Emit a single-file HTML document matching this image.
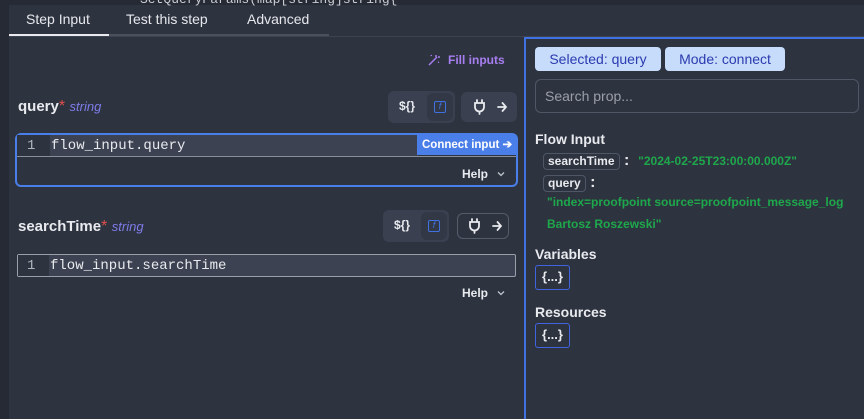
<!DOCTYPE html>
<html><head><style>
*{box-sizing:border-box;margin:0;padding:0}
body{width:864px;height:419px;overflow:hidden;background:#2e3340;font-family:"Liberation Sans",sans-serif;color:#e8eaee;position:relative}
.abs{position:absolute}
.mono{font-family:"Liberation Mono",monospace}
.tab{position:absolute;top:11px;font-size:14px;color:#e6e8ec}
.lbl{font-weight:bold;font-size:15px}
.str{color:#7c7ce8;font-style:italic;font-size:13px}
.grp{position:absolute;background:#3a4050;border-radius:6px}
.btn{position:absolute;border-radius:6px}
.pill{position:absolute;top:47px;height:24px;background:#c7dcfb;color:#2b3bb0;border-radius:4px;font-size:14px;line-height:24px;text-align:center}
.key{display:inline-block;border:1px solid #4f5666;border-radius:4px;padding:0 4px;font-size:12px;font-weight:bold;line-height:15px}
.green{color:#1ea84b;font-size:12px;font-weight:bold}
.h{position:absolute;left:535px;font-weight:bold;font-size:14px}
.obj{position:absolute;left:535px;width:35px;height:25px;border:1px solid #3f64e0;border-radius:3px;font-size:13px;font-weight:bold;text-align:center;line-height:22px}
</style></head><body>
<div class="abs" style="left:0;top:0;width:9px;height:419px;background:#262a34"></div>
<div class="abs" style="left:9px;top:0;width:855px;height:5px;background:#262a34"></div>
<div class="abs mono" style="left:140px;top:-8px;font-size:13px;color:#c9ccd2">SetQueryParams(map[string]string{</div>
<div class="tab" style="left:26px">Step Input</div>
<div class="tab" style="left:126px">Test this step</div>
<div class="tab" style="left:247px">Advanced</div>
<div class="abs" style="left:9px;top:36px;width:855px;height:1px;background:#3d4350"></div>
<div class="abs" style="left:109px;top:34px;width:220px;height:2px;background:#4a505c"></div>
<div class="abs" style="left:9px;top:34px;width:100px;height:2px;background:#e8eaee"></div>

<svg class="abs" style="left:427px;top:53px" width="14" height="14" viewBox="0 0 14 14" fill="none" stroke="#a77ef0" stroke-width="1.5"><path d="M2 12L10 4M9 2v2M11 4h2M4 2l.5 1M12 9l-1 .5"/></svg>
<div class="abs" style="left:448px;top:53px;color:#a77ef0;font-weight:bold;font-size:12px">Fill inputs</div>

<div class="abs" style="left:18px;top:98px"><span class="lbl">query</span><span style="color:#e0504a">*</span> <span class="str">string</span></div>
<div class="grp" style="left:388px;top:91px;width:67px;height:32px"></div>
<div class="abs" style="left:399px;top:99px;font-size:12px;font-weight:bold">${}</div>
<div class="btn" style="left:427px;top:93px;width:26px;height:28px;background:#323846"></div>
<div class="abs" style="left:434px;top:101px;width:12px;height:12px;border:1.5px solid #3f72e0;border-radius:2px;color:#3f72e0;font-size:9px;line-height:9px;text-align:center;font-style:italic">f</div>
<div class="btn" style="left:461px;top:92px;width:56px;height:30px;background:#3a4050"></div>
<svg class="abs" style="left:472px;top:99px" width="36" height="16" viewBox="0 0 36 16" fill="none" stroke="#e8eaee" stroke-width="1.8" stroke-linecap="round"><path d="M5 1v3M10 1v3M3 4h9v4a4.5 4.5 0 0 1-9 0zM7.5 12.5V15M26 8h8M30.5 4l3.5 4-3.5 4"/></svg>

<div class="abs" style="left:15px;top:133px;width:503px;height:54px;border:2px solid #4a7ee8;border-radius:6px"></div>
<div class="abs" style="left:17px;top:135px;width:499px;height:22px;border-bottom:1px solid #8a8f99;background:#2e3340"></div>
<div class="abs" style="left:50px;top:135px;width:368px;height:21px;background:#3c4252"></div>
<div class="abs mono" style="left:27px;top:138px;font-size:14px;color:#b0b4bc">1</div>
<div class="abs mono" style="left:51px;top:138px;font-size:14px">flow_input.query</div>
<div class="abs" style="left:417px;top:135px;width:99px;height:20px;background:#4a7ee8;color:#fff;font-size:11.5px;font-weight:bold;line-height:20px;padding-left:5px">Connect input ➔</div>
<div class="abs" style="left:462px;top:167px;font-size:12px;font-weight:bold">Help</div>
<svg class="abs" style="left:497px;top:171px" width="8" height="6" viewBox="0 0 8 6" fill="none" stroke="#c0c4cc" stroke-width="1.3"><path d="M1 1.5l3 3 3-3"/></svg>

<div class="abs" style="left:18px;top:218px"><span class="lbl">searchTime</span><span style="color:#e0504a">*</span> <span class="str">string</span></div>
<div class="grp" style="left:383px;top:210px;width:66px;height:32px"></div>
<div class="abs" style="left:394px;top:218px;font-size:12px;font-weight:bold">${}</div>
<div class="btn" style="left:421px;top:212px;width:26px;height:28px;background:#323846"></div>
<div class="abs" style="left:428px;top:220px;width:12px;height:12px;border:1.5px solid #3f72e0;border-radius:2px;color:#3f72e0;font-size:9px;line-height:9px;text-align:center;font-style:italic">f</div>
<div class="btn" style="left:457px;top:213px;width:52px;height:26px;border:1px solid #555c6a"></div>
<svg class="abs" style="left:467px;top:218px" width="36" height="16" viewBox="0 0 36 16" fill="none" stroke="#e8eaee" stroke-width="1.8" stroke-linecap="round"><path d="M5 1v3M10 1v3M3 4h9v4a4.5 4.5 0 0 1-9 0zM7.5 12.5V15M26 8h8M30.5 4l3.5 4-3.5 4"/></svg>

<div class="abs" style="left:17px;top:254px;width:499px;height:23px;border:1px solid #9aa0aa;border-radius:2px;background:#3c4252"></div>
<div class="abs" style="left:18px;top:255px;width:31px;height:21px;background:#2e3340"></div>
<div class="abs mono" style="left:27px;top:258px;font-size:14px;color:#b0b4bc">1</div>
<div class="abs mono" style="left:50px;top:258px;font-size:14px">flow_input.searchTime</div>
<div class="abs" style="left:462px;top:286px;font-size:12px;font-weight:bold">Help</div>
<svg class="abs" style="left:497px;top:290px" width="8" height="6" viewBox="0 0 8 6" fill="none" stroke="#c0c4cc" stroke-width="1.3"><path d="M1 1.5l3 3 3-3"/></svg>

<div class="abs" style="left:524px;top:37px;width:340px;height:382px;border-left:2px solid #3f72e0;border-top:2px solid #3f72e0"></div>
<div class="pill" style="left:535px;width:126px">Selected: query</div>
<div class="pill" style="left:665px;width:120px">Mode: connect</div>
<div class="abs" style="left:535px;top:79px;width:324px;height:34px;border:1px solid #4f5666;border-radius:6px;color:#9a9fa8;font-size:14px;line-height:32px;padding-left:9px">Search prop...</div>
<div class="h" style="top:131px">Flow Input</div>
<div class="abs" style="left:543px;top:152px"><span class="key">searchTime</span> <b>:</b> &nbsp;<span class="green">"2024-02-25T23:00:00.000Z"</span></div>
<div class="abs" style="left:543px;top:174px"><span class="key">query</span> <b>:</b></div>
<div class="abs green" style="left:547px;top:195px">"index=proofpoint source=proofpoint_message_log</div>
<div class="abs green" style="left:547px;top:217px">Bartosz Roszewski"</div>
<div class="h" style="top:246px">Variables</div>
<div class="obj" style="top:265px">{...}</div>
<div class="h" style="top:304px">Resources</div>
<div class="obj" style="top:323px">{...}</div>
</body></html>
